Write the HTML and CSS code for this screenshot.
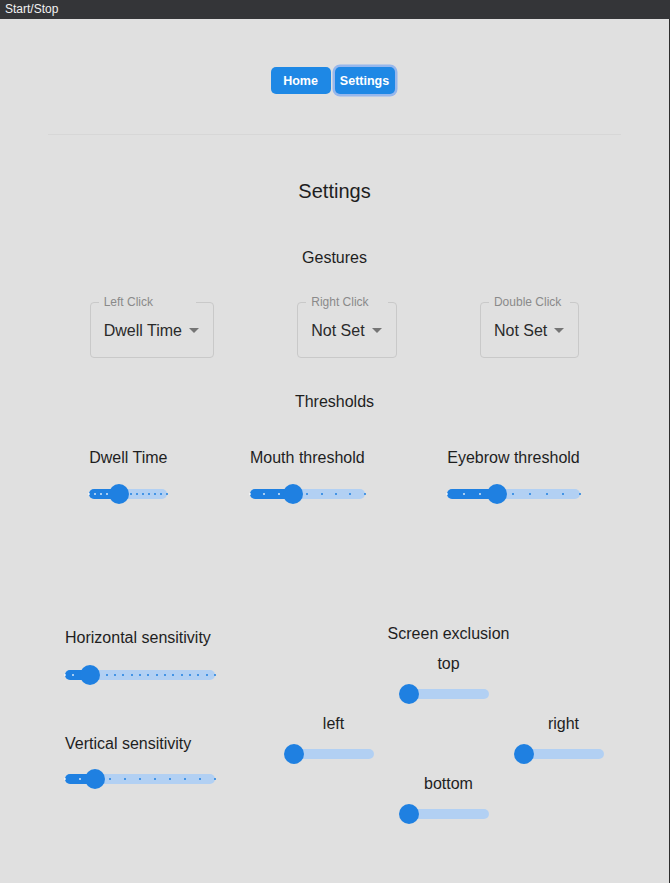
FILE: index.html
```html
<!DOCTYPE html>
<html lang="en">
<head>
<meta charset="utf-8">
<title>Start/Stop</title>
<link rel="stylesheet" href="styles.css">
</head>
<body>
<div class="titlebar">Start/Stop</div>
<main class="app">
  <nav class="nav">
    <button class="btn">Home</button>
    <button class="btn btn-focus">Settings</button>
  </nav>
  <hr class="divider">
  <h1 class="page-title">Settings</h1>

  <h2 class="section-title">Gestures</h2>
  <div class="gestures">
    <div class="select">
      <span class="select-label select-label-left">Left Click</span>
      <span class="select-value">Dwell Time</span>
      <svg class="select-icon" viewBox="0 0 24 24" width="24" height="24"><path d="M7 10l5 5 5-5z"/></svg>
    </div>
    <div class="select">
      <span class="select-label select-label-right">Right Click</span>
      <span class="select-value">Not Set</span>
      <svg class="select-icon" viewBox="0 0 24 24" width="24" height="24"><path d="M7 10l5 5 5-5z"/></svg>
    </div>
    <div class="select">
      <span class="select-label select-label-double">Double Click</span>
      <span class="select-value">Not Set</span>
      <svg class="select-icon" viewBox="0 0 24 24" width="24" height="24"><path d="M7 10l5 5 5-5z"/></svg>
    </div>
  </div>

  <h2 class="section-title section-title-thresholds">Thresholds</h2>
  <div class="thresholds">
    <div class="field">
      <div class="field-label">Dwell Time</div>
      <div class="slider slider-top" style="--p:38.46%">
        <div class="rail"></div>
        <div class="track"></div>
        <div class="marks">
          <i class="on"></i><i class="on"></i><i class="on"></i><i class="on"></i><i class="on"></i><i class="on"></i><i></i><i></i><i></i><i></i><i></i><i></i><i></i><i></i>
        </div>
        <div class="thumb"></div>
      </div>
    </div>
    <div class="field">
      <div class="field-label">Mouth threshold</div>
      <div class="slider slider-top" style="--p:37.5%">
        <div class="rail"></div>
        <div class="track"></div>
        <div class="marks">
          <i class="on"></i><i class="on"></i><i class="on"></i><i class="on"></i><i></i><i></i><i></i><i></i><i></i>
        </div>
        <div class="thumb"></div>
      </div>
    </div>
    <div class="field">
      <div class="field-label">Eyebrow threshold</div>
      <div class="slider slider-top" style="--p:37.5%">
        <div class="rail"></div>
        <div class="track"></div>
        <div class="marks">
          <i class="on"></i><i class="on"></i><i class="on"></i><i class="on"></i><i></i><i></i><i></i><i></i><i></i>
        </div>
        <div class="thumb"></div>
      </div>
    </div>
  </div>

  <div class="lower">
    <div class="sensitivity">
      <div class="field-label">Horizontal sensitivity</div>
      <div class="slider slider-h" style="--p:16.667%">
        <div class="rail"></div>
        <div class="track"></div>
        <div class="marks">
          <i class="on"></i><i class="on"></i><i class="on"></i><i class="on"></i><i></i><i></i><i></i><i></i><i></i><i></i><i></i><i></i><i></i><i></i><i></i><i></i><i></i><i></i><i></i>
        </div>
        <div class="thumb"></div>
      </div>
      <div class="field-label field-label-v">Vertical sensitivity</div>
      <div class="slider slider-v" style="--p:20%">
        <div class="rail"></div>
        <div class="track"></div>
        <div class="marks">
          <i class="on"></i><i class="on"></i><i class="on"></i><i></i><i></i><i></i><i></i><i></i><i></i><i></i><i></i>
        </div>
        <div class="thumb"></div>
      </div>
    </div>

    <div class="exclusion">
      <div class="field-label exclusion-title">Screen exclusion</div>
      <div class="exclusion-grid">
        <div class="ex-cell ex-top">
          <div class="field-label">top</div>
          <div class="slider slider-ex" style="--p:0%"><div class="rail"></div><div class="track"></div><div class="thumb"></div></div>
        </div>
        <div class="ex-cell ex-left">
          <div class="field-label">left</div>
          <div class="slider slider-ex" style="--p:0%"><div class="rail"></div><div class="track"></div><div class="thumb"></div></div>
        </div>
        <div class="ex-cell ex-right">
          <div class="field-label">right</div>
          <div class="slider slider-ex" style="--p:0%"><div class="rail"></div><div class="track"></div><div class="thumb"></div></div>
        </div>
        <div class="ex-cell ex-bottom">
          <div class="field-label">bottom</div>
          <div class="slider slider-ex" style="--p:0%"><div class="rail"></div><div class="track"></div><div class="thumb"></div></div>
        </div>
      </div>
    </div>
  </div>
</main>
</body>
</html>
```

FILE: styles.css
```css
* { box-sizing: border-box; }

html, body {
  margin: 0;
  padding: 0;
  background: #e0e0e0;
}

body {
  font-family: "Liberation Sans", Arial, sans-serif;
  color: #1e1e1e;
  width: 670px;
  height: 883px;
  overflow: hidden;
}

.titlebar {
  height: 19px;
  line-height: 19px;
  background: #343538;
  color: #f2f2f2;
  font-size: 12px;
  padding-left: 5px;
}

.app {
  height: 864px;
  padding: 0 48px;
  background: #e0e0e0;
  border-right: 1px solid #2e2e2e;
}

/* nav */
.nav {
  display: flex;
  justify-content: center;
  gap: 4px;
  padding-top: 48px;
  padding-right: 4px;
}

.btn {
  width: 60px;
  height: 27px;
  border: 0;
  border-radius: 5px;
  background: #1e88e5;
  color: #ffffff;
  font-family: "Liberation Sans", Arial, sans-serif;
  font-weight: bold;
  font-size: 12.5px;
  padding: 0;
}

.btn-focus {
  box-shadow: 0 0 0 2.5px rgba(90, 150, 245, 0.55);
}

.divider {
  border: 0;
  height: 1px;
  margin: 40px 0 0;
  background: #d7d7d7;
}

.page-title {
  margin: 44px 0 0;
  font-size: 20px;
  line-height: 24px;
  font-weight: normal;
  text-align: center;
  color: #1e1e1e;
}

.section-title {
  margin: 45px 0 0;
  font-size: 16px;
  line-height: 20px;
  font-weight: normal;
  text-align: center;
  color: #1e1e1e;
}

.section-title-thresholds {
  margin-top: 34px;
}

/* selects */
.gestures {
  display: flex;
  justify-content: space-around;
  margin-top: 34px;
}

.select {
  position: relative;
  display: flex;
  align-items: center;
  height: 56px;
  padding: 0 7px 0 13px;
  border: 1px solid #c9c9c9;
  border-radius: 4px;
}

.select-label {
  position: absolute;
  top: -8px;
  left: 8px;
  padding: 0 5px;
  font-size: 12px;
  line-height: 14px;
  color: #8a8a8a;
  background: #e0e0e0;
}

.select-label-left { width: 97px; }
.select-label-right { width: 82px; }
.select-label-double { width: 81px; }

.select-value {
  font-size: 16px;
  line-height: 23px;
  color: #2a2a2a;
}

.select-icon {
  display: block;
  fill: #757575;
}

/* thresholds */
.thresholds {
  display: flex;
  justify-content: space-around;
  margin-top: 36px;
}

.field-label {
  font-size: 16px;
  line-height: 20px;
  color: #1e1e1e;
  white-space: nowrap;
}

/* slider */
.slider {
  position: relative;
  height: 20px;
}

.slider-top { margin-top: 16px; }

.rail,
.track {
  position: absolute;
  top: 5px;
  height: 10px;
  border-radius: 5px;
}

.rail {
  left: 0;
  right: 0;
  background: #b2d0f3;
}

.track {
  left: 0;
  width: var(--p);
  background: #1f80e1;
}

.marks {
  position: absolute;
  left: -1px;
  right: -1px;
  top: 9px;
  height: 2px;
  display: flex;
  justify-content: space-between;
}

.marks i {
  display: block;
  width: 2px;
  height: 2px;
  border-radius: 1px;
  background: #1f80e1;
}

.marks i.on {
  background: rgba(255, 255, 255, 0.8);
}

.thumb {
  position: absolute;
  top: 0;
  left: var(--p);
  width: 20px;
  height: 20px;
  margin-left: -10px;
  border-radius: 50%;
  background: #1f80e1;
}

/* lower section */
.lower {
  display: flex;
  align-items: flex-start;
  margin-top: 120px;
}

.sensitivity {
  width: 150px;
  margin-left: 17px;
  padding-top: 4px;
}

.slider-h { margin-top: 17px; }
.field-label-v { margin-top: 49px; }
.slider-v { margin-top: 15px; }

.exclusion {
  margin-left: auto;
  width: 345px;
}

.exclusion-title {
  text-align: center;
}

.exclusion-grid {
  display: grid;
  grid-template-columns: repeat(3, 115px);
  grid-template-rows: repeat(3, 60px);
  margin-top: 10px;
}

.ex-cell {
  display: flex;
  flex-direction: column;
  align-items: center;
}

.ex-top { grid-column: 2; grid-row: 1; }
.ex-left { grid-column: 1; grid-row: 2; }
.ex-right { grid-column: 3; grid-row: 2; }
.ex-bottom { grid-column: 2; grid-row: 3; }

.slider-ex {
  width: 80px;
  margin-top: 10px;
}
```
